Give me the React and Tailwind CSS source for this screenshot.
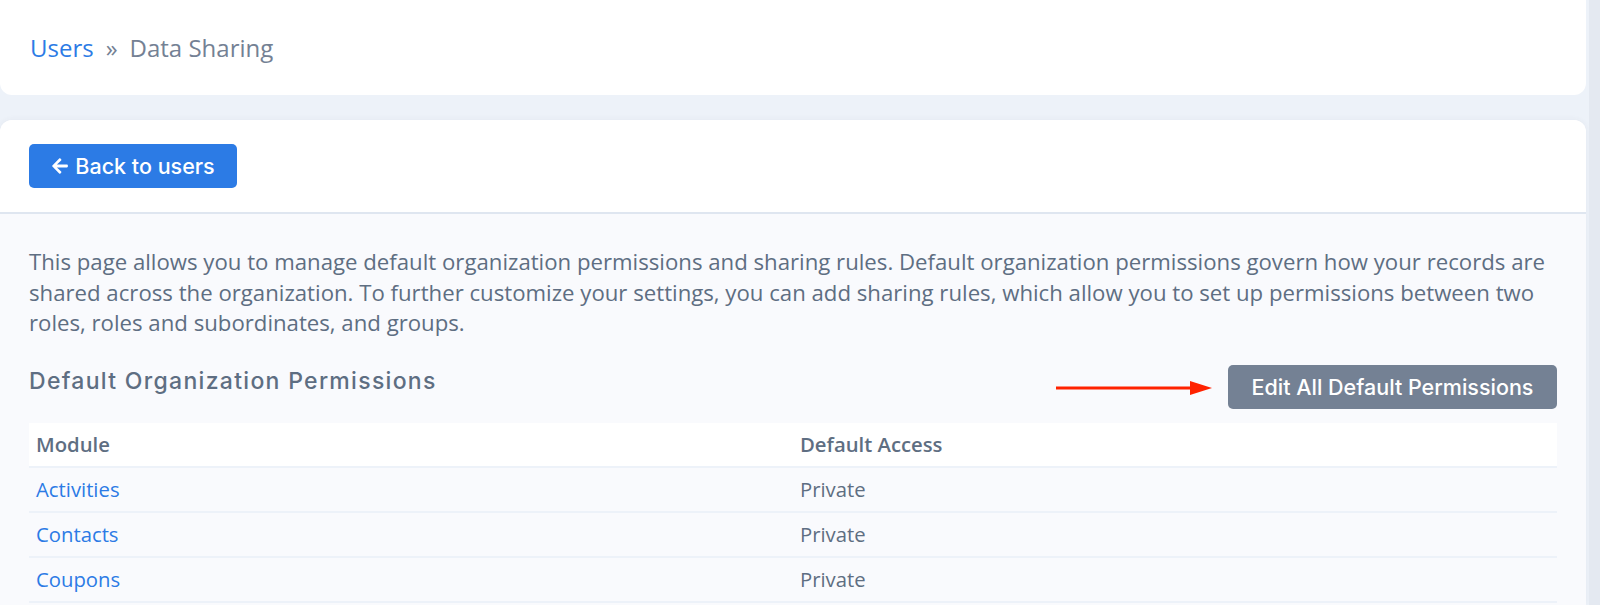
import { FaArrowLeft } from 'react-icons/fa'

const rows = [
  { module: 'Activities', access: 'Private' },
  { module: 'Contacts', access: 'Private' },
  { module: 'Coupons', access: 'Private' },
]

const body = { fontFamily: '"Open Sans", "Noto Sans", sans-serif' }
const display = { fontFamily: 'Inter, "Open Sans", sans-serif' }

export default function App() {
  return (
    <div className="h-[605px] w-full overflow-hidden bg-[#edf2f9] flex" style={body}>
      <div className="w-[1586px] shrink-0 flex flex-col">
        {/* Breadcrumb card */}
        <div className="h-[95px] bg-white rounded-b-xl flex items-center px-[30px] text-[24px] text-[#748194]">
          <a className="text-[#2c7be5]">Users</a>
          <span className="mx-[12px] text-[#748194]">»</span>
          <span>Data Sharing</span>
        </div>

        {/* Main card */}
        <div className="mt-[25px] flex-1 bg-[#f9fafd] rounded-t-xl overflow-hidden flex flex-col shadow-[0_0_6px_rgba(65,69,88,0.06)]">
          <div className="h-[94px] bg-white border-b-2 border-[#dfe6f0] flex items-center px-[29px]">
            <button
              className="h-[44px] w-[208px] bg-[#2c7be5] rounded-[5px] text-white text-[21.5px] font-medium flex items-center justify-center gap-[6px]"
              style={display}
            >
              <FaArrowLeft size={18} />
              Back to users
            </button>
          </div>

          <div className="px-[29px] pt-[33px]">
            <p className="text-[22.2px] leading-[30.5px] text-[#5e6e82]">
              This page allows you to manage default organization permissions and sharing rules. Default organization permissions govern how your records are shared across the organization. To further customize your settings, you can add sharing rules, which allow you to set up permissions between two roles, roles and subordinates, and groups.
            </p>

            <div className="mt-[25px] flex items-center justify-between">
              <h2 className="mb-[12px] text-[23px] tracking-[1.3px] font-medium text-[#5e6e82]" style={display}>
                Default Organization Permissions
              </h2>
              <div className="flex items-center gap-[16px]">
                {/* annotation arrow */}
                <svg width="156" height="16" viewBox="0 0 156 16" className="mt-[2px]">
                  <line x1="0" y1="8" x2="136" y2="8" stroke="#ff2200" strokeWidth="3" />
                  <polygon points="134,1 156,8 134,15" fill="#ff2200" />
                </svg>
                <button
                  className="h-[44px] w-[329px] bg-[#748194] rounded-[5px] text-white text-[21.5px] font-medium"
                  style={display}
                >
                  Edit All Default Permissions
                </button>
              </div>
            </div>

            <table className="mt-[13px] w-full text-[20.3px] text-left">
              <thead>
                <tr className="bg-white h-[44px] border-b-2 border-[#edf2f9]">
                  <th className="pl-[7px] font-semibold text-[#5e6e82] w-[764px]">Module</th>
                  <th className="pl-[7px] font-semibold text-[#5e6e82]">Default Access</th>
                </tr>
              </thead>
              <tbody>
                {rows.map((r) => (
                  <tr key={r.module} className="h-[45px] border-b-2 border-[#edf2f9]">
                    <td className="pl-[7px] text-[#2c7be5]">{r.module}</td>
                    <td className="pl-[7px] text-[#5e6e82]">{r.access}</td>
                  </tr>
                ))}
              </tbody>
            </table>
          </div>
        </div>
      </div>
      <div className="flex-1 flex">
        <div className="w-[3px]" />
        <div className="flex-1 bg-[#e4e9f1]" />
      </div>
    </div>
  )
}
